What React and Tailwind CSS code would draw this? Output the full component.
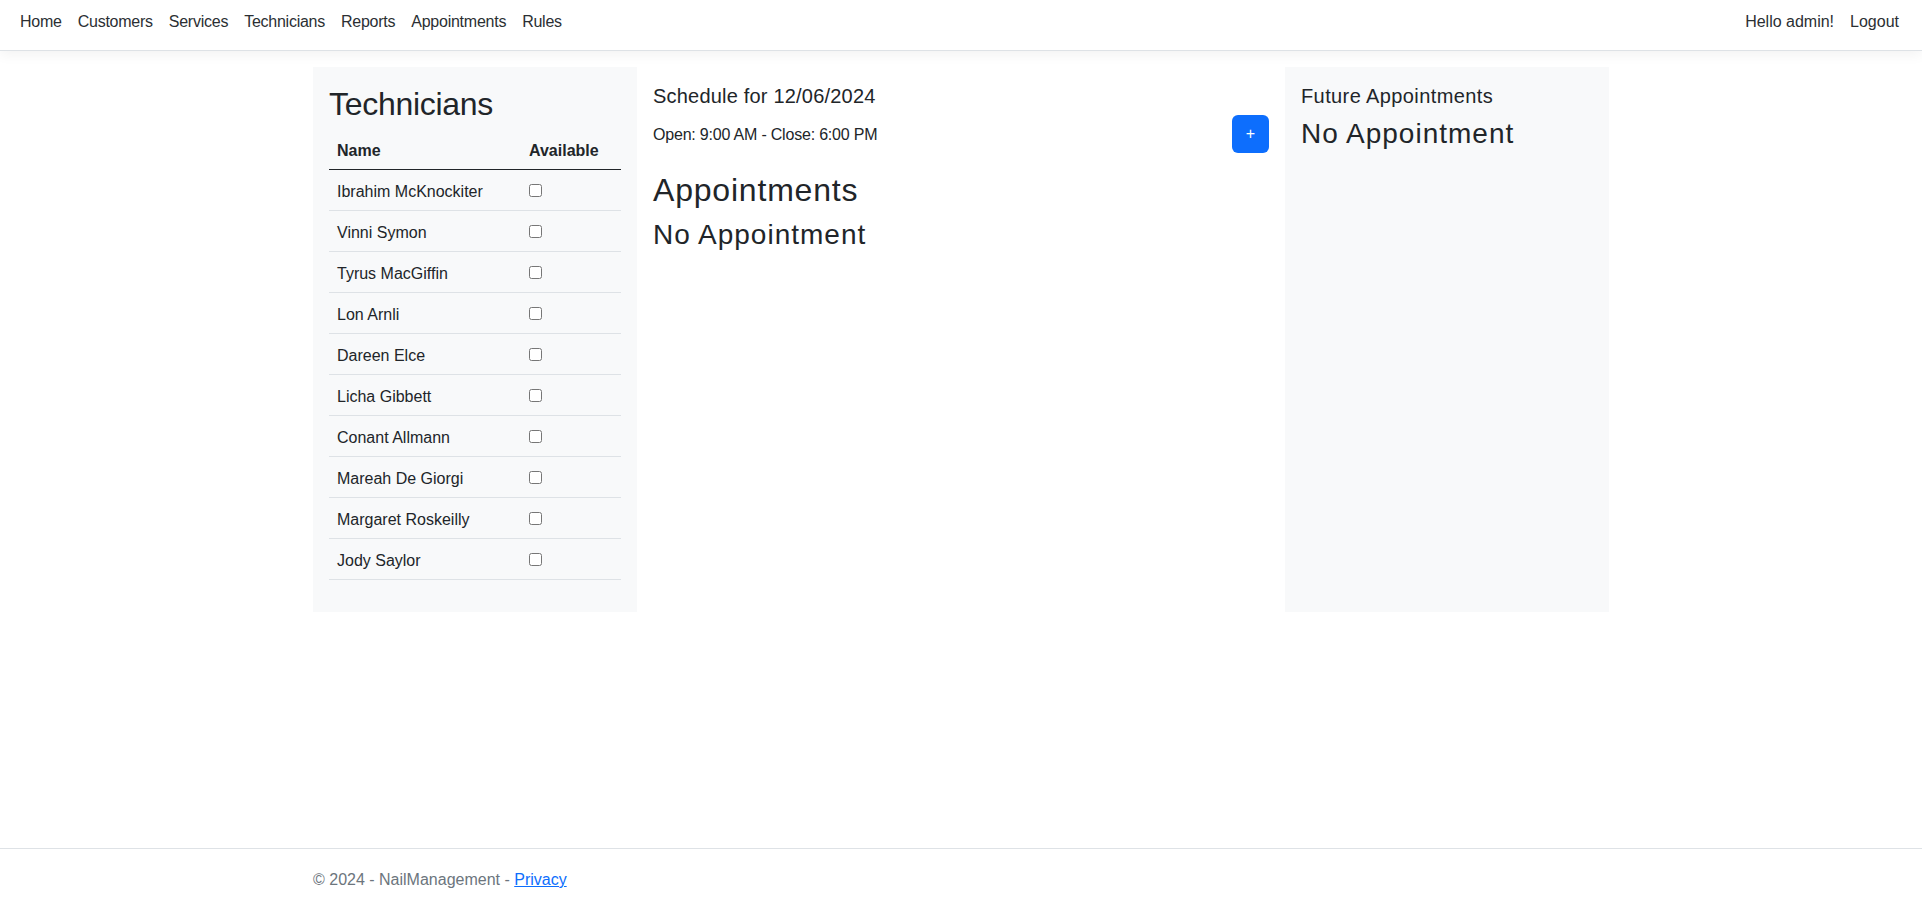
import React from "react";

const navLinks = ["Home", "Customers", "Services", "Technicians", "Reports", "Appointments", "Rules"];
const technicians = [
  "Ibrahim McKnockiter",
  "Vinni Symon",
  "Tyrus MacGiffin",
  "Lon Arnli",
  "Dareen Elce",
  "Licha Gibbett",
  "Conant Allmann",
  "Mareah De Giorgi",
  "Margaret Roskeilly",
  "Jody Saylor",
];

export default function App() {
  return (
    <div className="min-h-screen flex flex-col bg-white text-[#212529] font-['Liberation_Sans',Arial,sans-serif] text-[16px] leading-6">
      <header className="h-[51px] border-b border-[#dee2e6] bg-white shadow-[0_4px_12px_rgba(0,0,0,0.05)]">
        <nav className="flex justify-between pl-3 pr-[15px] pt-[10px]">
          <ul className="flex tracking-[-0.25px]">
            {navLinks.map((l) => (
              <li key={l}>
                <a href="#" className="block px-2 text-[#2b2f33]">{l}</a>
              </li>
            ))}
          </ul>
          <ul className="flex">
            <li><a href="#" className="block px-2 text-[#2b2f33]">Hello admin!</a></li>
            <li><a href="#" className="block px-2 text-[#2b2f33]">Logout</a></li>
          </ul>
        </nav>
      </header>

      <main className="flex-1">
        <div className="w-[1296px] mx-auto mt-4 grid grid-cols-4 items-stretch">
          <section className="bg-[#f8f9fa] p-4">
            <h2 className="text-[32px] leading-[38px] pt-[2px] mb-[6px] font-normal tracking-[-0.3px]">Technicians</h2>
            <table className="w-full border-collapse mb-4">
              <thead>
                <tr className="border-b border-[#212529]">
                  <th className="w-[192px] text-left font-bold px-2 pt-[10px] pb-[6px]">Name</th>
                  <th className="text-left font-bold px-2 pt-[10px] pb-[6px]">Available</th>
                </tr>
              </thead>
              <tbody>
                {technicians.map((t) => (
                  <tr key={t} className="border-b border-[#dee2e6]">
                    <td className="px-2 pt-[10px] pb-[6px]">{t}</td>
                    <td className="px-2 py-2">
                      <div className="h-6 flex items-center">
                        <input type="checkbox" className="block w-[13px] h-[13px] m-0" />
                      </div>
                    </td>
                  </tr>
                ))}
              </tbody>
            </table>
          </section>

          <section className="col-span-2 px-4 pt-[17px]">
            <h5 className="text-[20px] leading-6 mb-[7px] tracking-[0.2px]">Schedule for 12/06/2024</h5>
            <div className="flex justify-between items-center mb-4">
              <p className="pt-[2px] tracking-[-0.2px]">Open: 9:00 AM - Close: 6:00 PM</p>
              <button className="w-[37px] h-[38px] rounded-[6px] bg-[#0d6efd] text-white text-[16px] leading-6 flex items-center justify-center">+</button>
            </div>
            <h2 className="text-[32px] leading-[38px] pt-[2px] mb-2 tracking-[0.8px]">Appointments</h2>
            <h3 className="text-[28px] leading-[34px] pt-[1px] tracking-[1px]">No Appointment</h3>
          </section>

          <section className="bg-[#f8f9fa] px-4 pt-[17px] pb-4">
            <h5 className="text-[20px] leading-6 mb-2 tracking-[0.4px]">Future Appointments</h5>
            <h3 className="text-[28px] leading-[34px] pt-[1px] tracking-[1px]">No Appointment</h3>
          </section>
        </div>
      </main>

      <footer className="h-[58px] border-t border-[#dee2e6] text-[#6c757d]">
        <div className="w-[1296px] mx-auto pt-[19px] whitespace-nowrap">
          © 2024 - NailManagement - <a href="#" className="text-[#0d6efd] underline">Privacy</a>
        </div>
      </footer>
    </div>
  );
}
